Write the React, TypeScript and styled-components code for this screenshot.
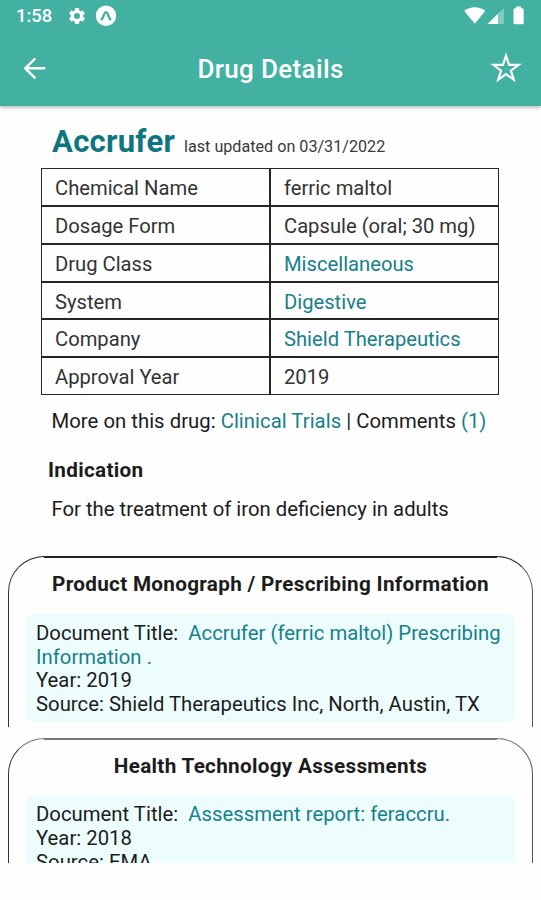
import React from 'react';
import styled, { createGlobalStyle } from 'styled-components';

const GlobalStyle = createGlobalStyle`
  * { box-sizing: border-box; }
  body { margin: 0; background: #fefefe; }
`;

const teal = '#43b1a1';
const linkColor = '#17808a';

const Screen = styled.div`
  width: 541px;
  height: 900px;
  display: flex;
  flex-direction: column;
  overflow: hidden;
  background: #fefefe;
  color: #1c1c1c;
  font-family: Roboto, sans-serif;
  font-size: 20.3px;
  line-height: 24px;
  white-space: nowrap;
`;

const Top = styled.header`
  flex: none;
  height: 106px;
  background: ${teal};
  color: #fff;
  box-shadow: 0 1px 4px rgba(0, 0, 0, 0.35);
  z-index: 1;
`;

const StatusBar = styled.div`
  height: 32px;
  padding: 0 17px 0 16px;
  display: flex;
  align-items: center;
  justify-content: space-between;
`;

const StatusGroup = styled.div`
  display: flex;
  align-items: center;
`;

const Clock = styled.span`
  width: 51px;
  font-size: 18.4px;
  font-weight: 500;
`;

const AppBar = styled.div`
  height: 74px;
  padding: 0 18px 0 22px;
  display: grid;
  grid-template-columns: 34px 1fr 34px;
  align-items: center;
`;

const Title = styled.h1`
  margin: 0 0 0 -4px;
  font-size: 26px;
  font-weight: 500;
  line-height: 32px;
  letter-spacing: 0.35px;
  text-align: center;
`;

const IconButton = styled.button`
  display: flex;
  padding: 0;
  border: 0;
  background: none;
  color: inherit;
`;

const Content = styled.main`
  flex: none;
  height: 757px;
  overflow: hidden;
`;

const NameRow = styled.div`
  height: 62px;
  padding: 15px 0 0 52px;
  display: flex;
  align-items: baseline;
`;

const DrugName = styled.h2`
  margin: 0 9px 0 0;
  font-size: 31px;
  line-height: 42px;
  font-weight: 700;
  letter-spacing: 0.3px;
  color: #0e7680;
`;

const Updated = styled.span`
  font-size: 16.15px;
  color: #3a3a3a;
`;

const Table = styled.div`
  width: 458px;
  margin-left: 41px;
  display: grid;
  grid-template-columns: 1fr 1fr;
  grid-template-rows: 38px 38px 38px 37px 38px 38px;
  font-size: 20.2px;
`;

const Cell = styled.div<{ $link?: boolean }>`
  border: 1px solid #262626;
  padding: 2px 0 0 13px;
  display: flex;
  align-items: center;
  color: ${(p) => (p.$link ? linkColor : '#333')};
`;

const Link = styled.span`
  color: ${linkColor};
`;

const More = styled.p`
  margin: 14px 0 0 51.5px;
  letter-spacing: 0.03px;
`;

const Heading = styled.h3<{ $centered?: boolean }>`
  margin: 0;
  font-size: 20.7px;
  line-height: 24px;
  font-weight: 700;
  letter-spacing: 0.3px;
  text-align: ${(p) => (p.$centered ? 'center' : 'left')};
`;

const Indication = styled.section`
  padding: 25px 0 0 48px;
  p {
    margin: 15px 0 0 3.5px;
  }
`;

const Card = styled.section<{ $line: string }>`
  height: 171px;
  margin: 0 8px 11px;
  padding: 15px 17px 0;
  border: 1px solid #333;
  border-top-color: ${(p) => p.$line};
  border-right-color: #555;
  border-bottom: 0;
  border-radius: 36px 36px 0 0;
  background: linear-gradient(${(p) => p.$line}, ${(p) => p.$line}) 35px 0 / calc(100% - 70px) 1px no-repeat;
`;

const Cards = styled.div`
  margin-top: 35px;
`;

const DocumentBox = styled.div<{ $gap: number }>`
  height: 108px;
  margin-top: ${(p) => p.$gap}px;
  padding: 8px 0 0 10px;
  border-radius: 6px;
  background: #edfdfe;
  line-height: 23.7px;
  letter-spacing: 0.02px;
`;

const Gap = styled.span`
  padding-left: 10px;
`;

const GearIcon = () => (
  <svg width="20" height="20" viewBox="0 0 24 24" fill="#fff">
    <path d="M19.14 12.94c.04-.3.06-.61.06-.94s-.02-.64-.07-.94l2.03-1.58a.49.49 0 0 0 .12-.61l-1.92-3.32a.49.49 0 0 0-.59-.22l-2.39.96a7 7 0 0 0-1.62-.94l-.36-2.54a.48.48 0 0 0-.48-.41h-3.84a.48.48 0 0 0-.47.41l-.36 2.54c-.59.24-1.13.57-1.62.94l-2.39-.96a.48.48 0 0 0-.59.22L2.74 8.87a.48.48 0 0 0 .12.61l2.03 1.58c-.05.3-.09.63-.09.94s.02.64.07.94l-2.03 1.58a.49.49 0 0 0-.12.61l1.92 3.32c.12.22.37.29.59.22l2.39-.96c.5.38 1.03.7 1.62.94l.36 2.54c.05.24.24.41.48.41h3.84c.24 0 .44-.17.47-.41l.36-2.54c.59-.24 1.13-.56 1.62-.94l2.39.96c.22.08.47 0 .59-.22l1.92-3.32a.48.48 0 0 0-.12-.61zM12 15.6a3.6 3.6 0 1 1 0-7.2 3.6 3.6 0 0 1 0 7.2z" />
  </svg>
);

const BadgeIcon = () => (
  <svg width="38" height="22" viewBox="0 0 38 22">
    <circle cx="19" cy="10.7" r="10.2" fill="#fff" />
    <path d="M14.6 14.5c2-2.3 2.7-7.4 4.4-7.4s2.4 5.1 4.4 7.4" fill="none" stroke={teal} strokeWidth="2.3" strokeLinecap="round" />
  </svg>
);

const SignalIcons = () => (
  <svg width="61" height="22" viewBox="463 4.5 61 22" fill="#fff">
    <path d="M464.3 10.5C470 5.6 479.5 5.6 485.2 10.5L474.8 23.2z" />
    <path d="M503.8 7.5V23.5H487.5z" fillOpacity="0.35" />
    <path d="M498 13.2V23.5H487.5z" />
    <path d="M516 6h5v1.7h1.2q1.5 0 1.5 1.5v13.1q0 1.5-1.5 1.5h-7.2q-1.5 0-1.5-1.5V9.2q0-1.5 1.5-1.5h1z" />
  </svg>
);

const BackIcon = () => (
  <svg width="26" height="26" viewBox="0 0 26 26" fill="none" stroke="#fff" strokeWidth="2.4" strokeLinecap="round" strokeLinejoin="round">
    <path d="M22.2 12.3H3.2M12.7 3L3.2 12.3L12.7 21.7" />
  </svg>
);

const StarIcon = () => (
  <svg width="36" height="36" viewBox="-18 -18 36 36" fill="none" stroke="#fff" strokeWidth="2.2" strokeMiterlimit="6">
    <path d="M0-14.2L3.2-4.4H13.5L5.15 1.7L8.34 11.5L0 5.4L-8.34 11.5L-5.15 1.7L-13.5-4.4H-3.2z" />
  </svg>
);

const facts = [
  { label: 'Chemical Name', value: 'ferric maltol' },
  { label: 'Dosage Form', value: 'Capsule (oral; 30 mg)' },
  { label: 'Drug Class', value: 'Miscellaneous', link: true },
  { label: 'System', value: 'Digestive', link: true },
  { label: 'Company', value: 'Shield Therapeutics', link: true },
  { label: 'Approval Year', value: '2019' },
];

export default function App() {
  return (
    <>
      <GlobalStyle />
      <Screen>
        <Top>
          <StatusBar>
            <StatusGroup>
              <Clock>1:58</Clock>
              <GearIcon />
              <BadgeIcon />
            </StatusGroup>
            <SignalIcons />
          </StatusBar>
          <AppBar>
            <IconButton aria-label="Back">
              <BackIcon />
            </IconButton>
            <Title>Drug Details</Title>
            <IconButton aria-label="Favorite">
              <StarIcon />
            </IconButton>
          </AppBar>
        </Top>
        <Content>
          <NameRow>
            <DrugName>Accrufer</DrugName>
            <Updated>last updated on 03/31/2022</Updated>
          </NameRow>
          <Table>
            {facts.map((f) => (
              <React.Fragment key={f.label}>
                <Cell>{f.label}</Cell>
                <Cell $link={f.link}>{f.value}</Cell>
              </React.Fragment>
            ))}
          </Table>
          <More>
            More on this drug: <Link>Clinical Trials</Link> | Comments <Link>(1)</Link>
          </More>
          <Indication>
            <Heading>Indication</Heading>
            <p>For the treatment of iron deficiency in adults</p>
          </Indication>
          <Cards>
            <Card $line="#222">
              <Heading $centered>Product Monograph / Prescribing Information</Heading>
              <DocumentBox $gap={18}>
                <div>
                  Document Title:
                  <Gap />
                  <Link>Accrufer (ferric maltol) Prescribing</Link>
                </div>
                <div>
                  <Link>Information .</Link>
                </div>
                <div>Year: 2019</div>
                <div>Source: Shield Therapeutics Inc, North, Austin, TX</div>
              </DocumentBox>
            </Card>
            <Card $line="#777">
              <Heading $centered>Health Technology Assessments</Heading>
              <DocumentBox $gap={17.4}>
                <div>
                  Document Title:
                  <Gap />
                  <Link>Assessment report: feraccru.</Link>
                </div>
                <div>Year: 2018</div>
                <div>Source: EMA</div>
              </DocumentBox>
            </Card>
          </Cards>
        </Content>
      </Screen>
    </>
  );
}
